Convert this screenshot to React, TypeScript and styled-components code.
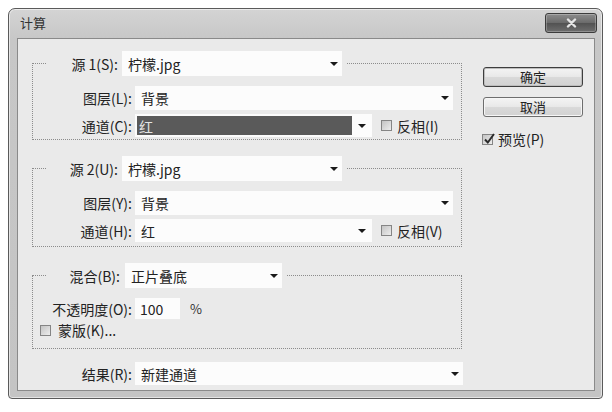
import React from "react";
import styled, { createGlobalStyle } from "styled-components";

const GlobalStyle = createGlobalStyle`
  html, body {
    margin: 0;
    padding: 0;
    background: #ffffff;
  }
  body {
    font-family: "Noto Sans CJK SC", "Noto Sans", sans-serif;
    color: #222;
  }
`;

const Page = styled.div`
  width: 612px;
  height: 412px;
  padding: 8px 0 0 8px;
  box-sizing: border-box;
`;

const Window = styled.div`
  width: 595px;
  height: 391px;
  box-sizing: border-box;
  border: 1px solid #5a5a5a;
  border-radius: 7px 7px 4px 4px;
  background: linear-gradient(#d4d4d4, #c7c7c7 30px, #c4c4c4);
  box-shadow: inset 0 0 0 1px rgba(255, 255, 255, 0.55);
  display: flex;
  flex-direction: column;
`;

const TitleBar = styled.div`
  height: 29px;
  display: flex;
  align-items: flex-start;
  flex-shrink: 0;
`;

const Title = styled.span`
  margin: 6px 0 0 11px;
  font-size: 13px;
  line-height: 16px;
  color: #333;
`;

const CloseButton = styled.div`
  width: 52px;
  height: 20px;
  margin: 4px 5px 0 auto;
  box-sizing: border-box;
  border: 1px solid #3c3c3c;
  border-radius: 3px;
  background: linear-gradient(#8c8c8c, #6a6a6a 50%, #525252 51%, #6e6e6e);
  box-shadow: inset 0 0 0 1px rgba(255, 255, 255, 0.25);
  display: flex;
  align-items: center;
  justify-content: center;
`;

const Client = styled.div`
  flex: 1;
  margin: 0 7px 7px 8px;
  border: 1px solid #8a8a8a;
  background: #eaeaea;
  display: flex;
`;

const LeftColumn = styled.div`
  width: 431px;
  padding: 12px 0 0 14px;
  display: flex;
  flex-direction: column;
`;

const RightColumn = styled.div`
  width: 100px;
  margin-left: 20px;
  padding-top: 28px;
  display: flex;
  flex-direction: column;
`;

const Group = styled.fieldset<{ $pb: number; $mt?: number }>`
  width: 430px;
  box-sizing: border-box;
  min-width: 0;
  margin: ${(p) => p.$mt ?? 0}px 0 0 0;
  padding: 0 0 ${(p) => p.$pb}px 0;
  border: 1px dotted #8c8c8c;
`;

const Legend = styled.legend`
  margin-left: 13px;
  padding: 0 5px 0 0;
  display: flex;
  align-items: center;
`;

const Rows = styled.div<{ $pt: number; $gap: number }>`
  padding-top: ${(p) => p.$pt}px;
  display: flex;
  flex-direction: column;
  gap: ${(p) => p.$gap}px;
`;

const Row = styled.div<{ $h: number; $mt?: number }>`
  height: ${(p) => p.$h}px;
  margin-top: ${(p) => p.$mt ?? 0}px;
  display: flex;
  align-items: center;
`;

const Label = styled.span<{ $w: number; $gap?: number }>`
  width: ${(p) => p.$w}px;
  margin-right: ${(p) => p.$gap ?? 3}px;
  flex-shrink: 0;
  text-align: right;
  font-size: 14px;
  line-height: 18px;
  white-space: nowrap;
  color: #222;
`;

const SelectBox = styled.div<{ $w: number; $h: number }>`
  width: ${(p) => p.$w}px;
  height: ${(p) => p.$h}px;
  flex-shrink: 0;
  background: #fcfcfc;
  display: flex;
  align-items: stretch;
`;

const SelectValue = styled.span<{ $active?: boolean }>`
  flex: 1;
  display: flex;
  align-items: center;
  margin: ${(p) => (p.$active ? "2px 0 2px 2px" : "0")};
  padding-left: ${(p) => (p.$active ? 2 : 6)}px;
  background: ${(p) => (p.$active ? "#5a5a5a" : "transparent")};
  color: ${(p) => (p.$active ? "#e4e4e4" : "#222")};
  font-size: 14px;
  white-space: nowrap;
`;

const ArrowArea = styled.span<{ $w: number }>`
  width: ${(p) => p.$w}px;
  display: flex;
  align-items: center;
  justify-content: center;
`;

const Arrow = styled.span`
  width: 0;
  height: 0;
  border-left: 4px solid transparent;
  border-right: 4px solid transparent;
  border-top: 4px solid #1a1a1a;
`;

const NumberBox = styled.div`
  width: 45px;
  height: 21px;
  background: #fcfcfc;
  display: flex;
  align-items: center;
  padding-left: 5px;
  box-sizing: border-box;
  font-size: 14px;
  color: #222;
`;

const Unit = styled.span`
  margin-left: 10px;
  font-size: 13px;
  color: #333;
`;

const CheckLine = styled.label<{ $ml?: number; $mt?: number }>`
  display: flex;
  align-items: center;
  margin-left: ${(p) => p.$ml ?? 0}px;
  margin-top: ${(p) => p.$mt ?? 0}px;
  font-size: 14px;
  line-height: 18px;
  color: #222;
  white-space: nowrap;
`;

const Box = styled.span<{ $gap: number }>`
  width: 11px;
  height: 11px;
  box-sizing: border-box;
  margin-right: ${(p) => p.$gap}px;
  border: 1px solid #858585;
  background: linear-gradient(135deg, #c4c4c4, #ededed);
  position: relative;
  flex-shrink: 0;
`;

const Tick = styled.svg`
  position: absolute;
  left: 0;
  top: -3px;
`;

const Button = styled.button<{ $primary?: boolean }>`
  width: 100px;
  height: 20px;
  padding: 0;
  box-sizing: border-box;
  border: 1px solid ${(p) => (p.$primary ? "#3e3e3e" : "#6e6e6e")};
  border-radius: 3px;
  background: linear-gradient(#f4f4f4, #e8e8e8 50%, #d9d9d9 51%, #d2d2d2);
  box-shadow: inset 0 0 0 1px ${(p) => (p.$primary ? "#bdbdbd" : "#f6f6f6")};
  font-family: "Noto Sans CJK SC", sans-serif;
  font-size: 13px;
  line-height: 18px;
  color: #222;
  & + & {
    margin-top: 10px;
  }
`;

const Select = ({
  w,
  h,
  value,
  active,
  arrow = 16,
}: {
  w: number;
  h: number;
  value: string;
  active?: boolean;
  arrow?: number;
}) => (
  <SelectBox $w={w} $h={h}>
    <SelectValue $active={active}>{value}</SelectValue>
    <ArrowArea $w={arrow}>
      <Arrow />
    </ArrowArea>
  </SelectBox>
);

const Checkbox = ({
  label,
  checked,
  gap,
  ml,
  mt,
}: {
  label: string;
  checked?: boolean;
  gap: number;
  ml?: number;
  mt?: number;
}) => (
  <CheckLine $ml={ml} $mt={mt}>
    <Box $gap={gap}>
      {checked && (
        <Tick width="13" height="13" viewBox="0 0 13 13">
          <polyline
            points="2,7.5 4.8,10.5 11,2"
            fill="none"
            stroke="#2a2a2a"
            strokeWidth="2"
          />
        </Tick>
      )}
    </Box>
    {label}
  </CheckLine>
);

export default function App() {
  return (
    <Page>
      <GlobalStyle />
      <Window>
        <TitleBar>
          <Title>计算</Title>
          <CloseButton>
            <svg width="11" height="10" viewBox="0 0 11 10">
              <path
                d="M2 1.5 L9 8.5 M9 1.5 L2 8.5"
                stroke="#e6e6e6"
                strokeWidth="2.4"
                strokeLinecap="round"
              />
            </svg>
          </CloseButton>
        </TitleBar>
        <Client>
          <LeftColumn>
            <Group $pb={2}>
              <Legend>
                <Label $w={72} $gap={4}>
                  源 1(S):
                </Label>
                <Select w={220} h={25} value="柠檬.jpg" />
              </Legend>
              <Rows $pt={10} $gap={4}>
                <Row $h={24}>
                  <Label $w={99}>图层(L):</Label>
                  <Select w={318} h={24} value="背景" />
                </Row>
                <Row $h={23}>
                  <Label $w={99}>通道(C):</Label>
                  <Select w={237} h={23} value="红" active arrow={20} />
                  <Checkbox label="反相(I)" gap={5} ml={9} />
                </Row>
              </Rows>
            </Group>

            <Group $pb={4} $mt={16}>
              <Legend>
                <Label $w={72} $gap={4}>
                  源 2(U):
                </Label>
                <Select w={220} h={25} value="柠檬.jpg" />
              </Legend>
              <Rows $pt={10} $gap={4}>
                <Row $h={24}>
                  <Label $w={99}>图层(Y):</Label>
                  <Select w={318} h={24} value="背景" />
                </Row>
                <Row $h={23}>
                  <Label $w={99}>通道(H):</Label>
                  <Select w={237} h={23} value="红" arrow={20} />
                  <Checkbox label="反相(V)" gap={5} ml={9} />
                </Row>
              </Rows>
            </Group>

            <Group $pb={11} $mt={16}>
              <Legend>
                <Label $w={74} $gap={5}>
                  混合(B):
                </Label>
                <Select w={157} h={25} value="正片叠底" />
              </Legend>
              <Rows $pt={10} $gap={4}>
                <Row $h={21}>
                  <Label $w={99}>不透明度(O):</Label>
                  <NumberBox>100</NumberBox>
                  <Unit>%</Unit>
                </Row>
                <Row $h={14}>
                  <Checkbox label="蒙版(K)..." gap={7} ml={7} />
                </Row>
              </Rows>
            </Group>

            <Row $h={23} $mt={13}>
              <Label $w={100}>结果(R):</Label>
              <Select w={328} h={23} value="新建通道" />
            </Row>
          </LeftColumn>

          <RightColumn>
            <Button $primary>确定</Button>
            <Button>取消</Button>
            <Checkbox label="预览(P)" checked gap={5} ml={-1} mt={13} />
          </RightColumn>
        </Client>
      </Window>
    </Page>
  );
}
